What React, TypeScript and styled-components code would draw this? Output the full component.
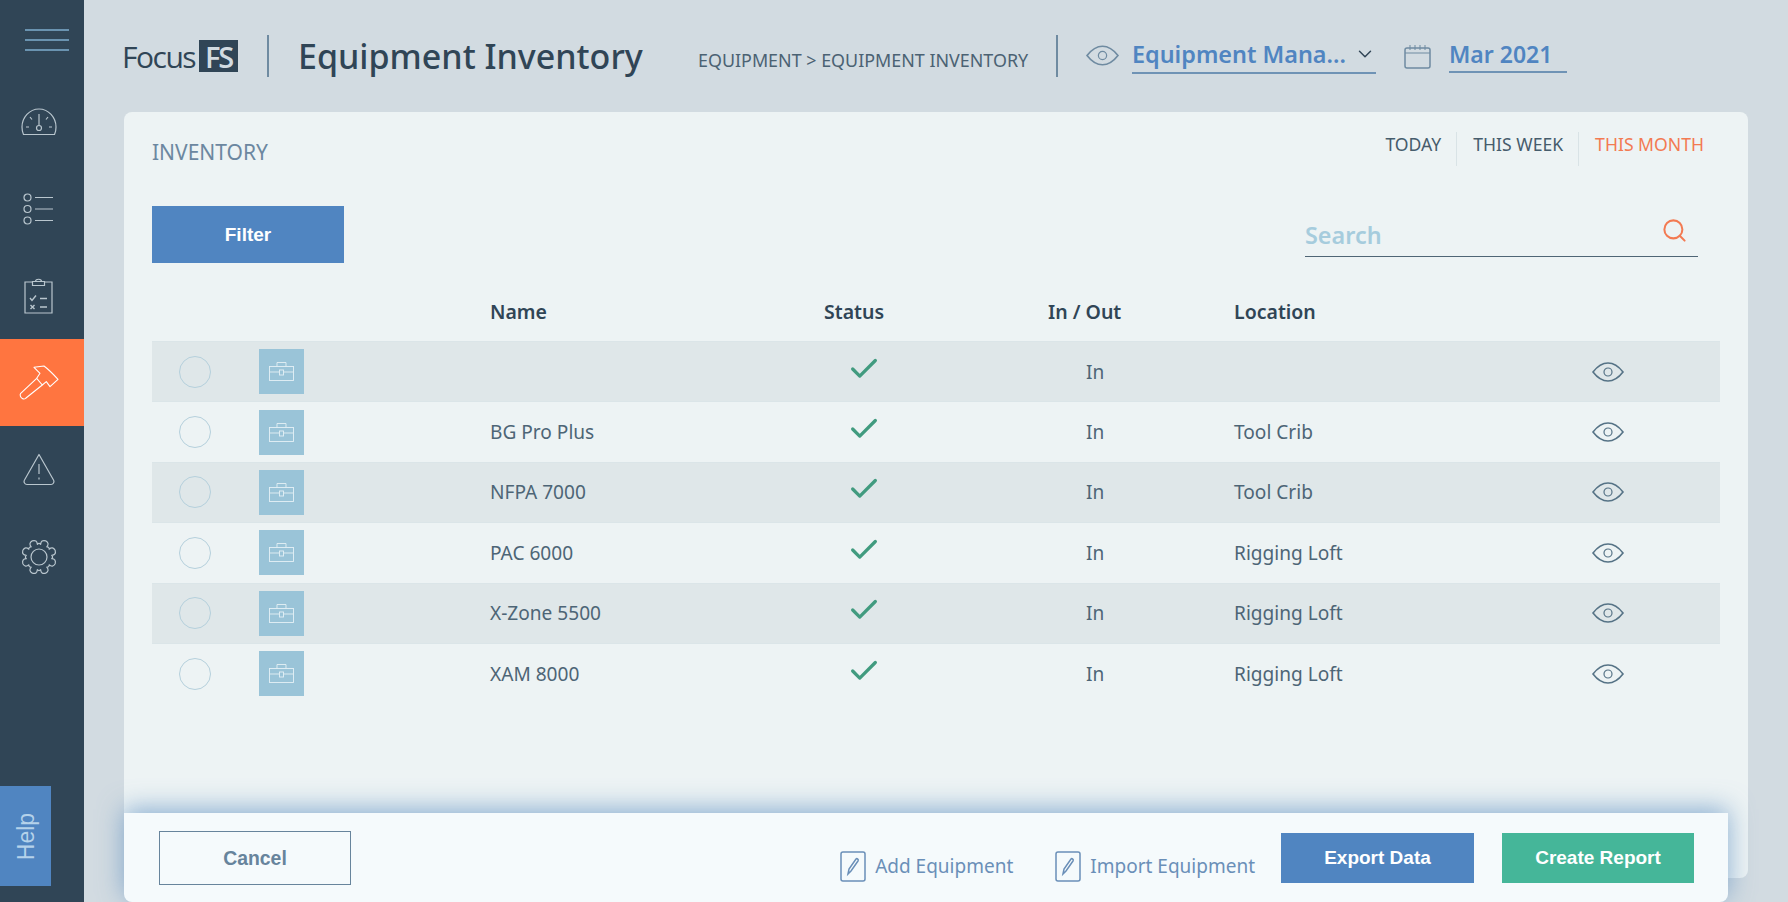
import styled, { createGlobalStyle } from "styled-components";
import { Check, ChevronDown, Search } from "lucide-react";

const GlobalStyle = createGlobalStyle`
  html, body {
    margin: 0;
    padding: 0;
    height: 100%;
    overflow: hidden;
    background: #d2dbe1;
  }
  * {
    box-sizing: border-box;
  }
`;

const Shell = styled.div`
  display: flex;
  height: 902px;
  font-family: "Noto Sans", sans-serif;
  color: #304556;
`;

const Sidebar = styled.nav`
  position: relative;
  flex: 0 0 84px;
  background: #304556;
  display: flex;
  flex-direction: column;
`;

const MenuButton = styled.div`
  height: 78px;
  padding: 29px 15px 0 25px;
  display: flex;
  flex-direction: column;
  gap: 8px;

  span {
    height: 2px;
    background: #6a93b0;
  }
`;

const SideItem = styled.div<{ $active?: boolean }>`
  height: 87px;
  display: flex;
  align-items: center;
  justify-content: center;
  padding-right: 7px;
  color: ${({ $active }) => ($active ? "#fff" : "#b9c6ce")};
  background: ${({ $active }) => ($active ? "#ff7540" : "transparent")};
`;

const HelpTab = styled.div`
  position: absolute;
  left: 0;
  top: 786px;
  width: 51px;
  height: 100px;
  padding-left: 2px;
  background: #5085c1;
  color: #b5d2ea;
  font-family: "Liberation Sans", sans-serif;
  font-size: 23px;
  display: flex;
  align-items: center;
  justify-content: center;

  span {
    transform: rotate(-90deg);
  }
`;

const Main = styled.main`
  position: relative;
  flex: 1;
  min-width: 0;
  padding: 0 40px 24px 40px;
  display: flex;
  flex-direction: column;
`;

const TopBar = styled.header`
  height: 112px;
  display: flex;
  align-items: flex-start;
  padding-top: 35px;
`;

const Logo = styled.div`
  width: 147px;
  height: 42px;
  margin-left: -2px;
  display: flex;
  align-items: center;
  gap: 4px;
  font-weight: 400;
  font-family: "Open Sans", sans-serif;
  font-size: 30px;
  letter-spacing: -1.5px;
  color: #304556;
  border-right: 2px solid #6f8ba1;

  b {
    width: 39px;
    height: 32px;
    display: flex;
    align-items: center;
    justify-content: center;
    background: #304556;
    color: #d2dbe1;
    font-weight: 600;
    font-size: 29px;
    letter-spacing: -2px;
  }
`;

const Title = styled.h1`
  margin: 0 0 0 29px;
  width: 400px;
  height: 42px;
  line-height: 42px;
  font-size: 34px;
  font-weight: 500;
  color: #304556;
  white-space: nowrap;
`;

const Crumbs = styled.div`
  width: 360px;
  height: 42px;
  padding-top: 13px;
  font-size: 17.9px;
  line-height: 24px;
  color: #4b6273;
  white-space: nowrap;
  border-right: 2px solid #6f8ba1;
`;

const Picker = styled.div<{ $width: number; $line: number; $size: number }>`
  width: ${({ $width }) => $width}px;
  height: 39px;
  border-bottom: 2px solid #6f93b5;
  display: flex;
  align-items: center;
  justify-content: space-between;
  font-size: ${({ $size }) => $size}px;
  font-weight: 600;
  color: #5085c1;
  white-space: nowrap;
  padding-top: ${({ $line }) => ($line < 0 ? 3 : 0)}px;
  margin-top: ${({ $line }) => $line}px;
`;

const TopIcon = styled.span<{ $gap: number; $left: number }>`
  display: flex;
  margin: 10px ${({ $gap }) => $gap}px 0 ${({ $left }) => $left}px;
  color: #6f8ba1;
`;

const Card = styled.section`
  position: relative;
  flex: 1;
  background: #edf3f4;
  border-radius: 8px;
  padding: 0 28px;
`;

const CardHead = styled.div`
  height: 94px;
  display: flex;
  justify-content: space-between;
  align-items: flex-start;
`;

const CardTitle = styled.h2`
  margin: 27px 0 0;
  font-size: 21px;
  line-height: 27px;
  font-weight: 400;
  color: #6c87a0;
`;

const Ranges = styled.div`
  display: flex;
  margin: 20px 16px 0 0;
`;

const Range = styled.span<{ $active?: boolean; $first?: boolean }>`
  font-size: 17.6px;
  line-height: 24px;
  height: 34px;
  padding: 0 ${({ $active }) => ($active ? "0" : "15px")} 0 ${({ $first }) => ($first ? "0" : "16px")};
  border-right: ${({ $active }) => ($active ? "none" : "1px solid #d9e3e6")};
  color: ${({ $active }) => ($active ? "#f37a52" : "#465c6c")};
`;

const Tools = styled.div`
  height: 57px;
  display: flex;
  justify-content: space-between;
`;

const Button = styled.button<{ $bg: string; $w: number; $h: number; $gap?: number }>`
  width: ${({ $w }) => $w}px;
  height: ${({ $h }) => $h}px;
  margin-right: ${({ $gap }) => $gap ?? 0}px;
  border: none;
  background: ${({ $bg }) => $bg};
  color: #fff;
  font-family: "Liberation Sans", sans-serif;
  font-weight: 700;
  font-size: 19px;
  padding: 0;
`;

const SearchBox = styled.div`
  width: 393px;
  height: 51px;
  margin-right: 22px;
  border-bottom: 1.5px solid #4f6575;
  display: flex;
  align-items: center;
  justify-content: space-between;
  padding: 0 10px 0 0;
  font-size: 23.4px;
  font-weight: 600;
  color: #a6ccdd;

  span {
    margin-top: 7px;
  }

  svg {
    color: #f37a52;
    margin-top: -2px;
  }
`;

const Columns = "107px 231px 334px 224px 186px 266px 1fr";

const HeadRow = styled.div`
  display: grid;
  grid-template-columns: ${Columns};
  height: 78px;
  align-items: center;
  padding-top: 18px;
  font-size: 19.5px;
  font-weight: 600;
  color: #304556;
`;

const Row = styled.div<{ $shade: boolean }>`
  display: grid;
  grid-template-columns: ${Columns};
  height: 60.4px;
  align-items: center;
  font-size: 19.1px;
  color: #4d6576;
  background: ${({ $shade }) => ($shade ? "#dfe7e9" : "transparent")};
  border-top: 1px solid #dbe5e8;
`;

const Radio = styled.span`
  width: 32px;
  height: 32px;
  margin-left: 27px;
  border-radius: 50%;
  border: 1.5px solid #b5d0dc;
`;

const Thumb = styled.span`
  width: 45px;
  height: 45px;
  background: #9ac4d8;
  color: #e4f0f5;
  display: flex;
  align-items: center;
  justify-content: center;
`;

const StatusCell = styled.span`
  display: flex;
  padding-left: 23px;
  margin-top: -6px;
  color: #419b7f;
`;

const InOutCell = styled.span`
  padding-left: 38px;
`;

const EyeCell = styled.span`
  display: flex;
  padding-left: 92px;
  color: #567386;
`;

const Footer = styled.footer`
  position: absolute;
  left: 40px;
  bottom: 0;
  width: 1604px;
  height: 89px;
  background: #f5fafc;
  border-radius: 0 0 8px 8px;
  box-shadow: 0 -4px 26px rgba(94, 144, 194, 0.7);
  padding: 18px 34px 0 35px;
  display: flex;
  align-items: flex-start;
`;

const CancelButton = styled.button`
  width: 192px;
  height: 54px;
  background: transparent;
  border: 1px solid #67849c;
  color: #67849c;
  font-family: "Liberation Sans", sans-serif;
  font-weight: 700;
  font-size: 19.4px;
  padding: 0;
  margin-right: auto;
`;

const LinkAction = styled.div<{ $gap: number }>`
  display: flex;
  align-items: center;
  gap: 9px;
  height: 32px;
  margin: 19px ${({ $gap }) => $gap}px 0 0;
  font-size: 19px;
  color: #6a8fb8;
  white-space: nowrap;
`;

const FooterButton = styled(Button)`
  margin-top: 2px;
`;

const gearPath = (() => {
  const at = (r: number, deg: number) => {
    const a = (deg * Math.PI) / 180;
    return `${(18 + r * Math.cos(a)).toFixed(2)} ${(18 + r * Math.sin(a)).toFixed(2)}`;
  };
  let d = "";
  for (let i = 0; i < 8; i++) {
    const c = i * 45 + 22.5;
    d += `${i === 0 ? "M" : "L"}${at(12.8, c - 15)} Q${at(17.5, c - 16)} ${at(17.5, c)} Q${at(17.5, c + 16)} ${at(12.8, c + 15)} `;
    d += `Q${at(14.5, c + 22.5)} ${at(12.8, c + 30)} `;
  }
  return d + "Z";
})();

const EyeIcon = ({ w, h }: { w: number; h: number }) => (
  <svg width={w} height={h} viewBox="0 0 32 20" fill="none" stroke="currentColor" strokeWidth="1.6">
    <path d="M1 10C6 3.500 10.500 1 16 1s10 2.500 15 9c-5 6.500-9.500 9-15 9s-10-2.500-15-9z" />
    <circle cx="16" cy="10" r="4" strokeWidth="1.200" />
  </svg>
);

const CalendarIcon = () => (
  <svg width="27" height="24" viewBox="0 0 27 24" fill="none" stroke="currentColor" strokeWidth="1.500">
    <rect x="1" y="3" width="25" height="20" rx="2" />
    <path d="M1 8h25M6 0v5M11 0v5M16 0v5M21 0v5" strokeWidth="1" />
  </svg>
);

const GaugeIcon = () => (
  <svg width="36" height="28" viewBox="0 0 36 28" fill="none" stroke="currentColor" strokeWidth="1.200">
    <path d="M2.500 26.500C1.500 24.500 1 22.500 1 19 1 9.500 8.500 1 18 1s17 8.500 17 18c0 3.500-.5 5.500-1.500 7.500z" />
    <circle cx="18" cy="20" r="2.500" />
    <path d="M18 17V6M5 19h3M28 19h3M9 9l2 2.500M27 9l-2 2.500" />
  </svg>
);

const ListIcon = () => (
  <svg width="32" height="32" viewBox="0 0 32 32" fill="none" stroke="currentColor" strokeWidth="1.200">
    <circle cx="4.500" cy="4.500" r="3.500" />
    <circle cx="4.500" cy="16" r="3.500" />
    <circle cx="4.500" cy="27.500" r="3.500" />
    <path d="M12 4.500h18M12 16h18M12 27.500h18" />
  </svg>
);

const ClipboardIcon = () => (
  <svg width="30" height="36" viewBox="0 0 30 36" fill="none" stroke="currentColor" strokeWidth="1.200">
    <path d="M9 4H1v31h27V4h-8" />
    <path d="M8.500 7.500V3.500h12v4zM11.500 3.500C11.500 .5 17.500 .5 17.500 3.500" />
    <path d="M6 20l2 2.500 4-5M16 20.500h7M6.500 27l4 4M10.500 27l-4 4M16 29h7" strokeWidth="1.400" />
  </svg>
);

const HammerIcon = () => (
  <svg width="40" height="36" viewBox="0 0 40 36" fill="none" stroke="currentColor" strokeWidth="1.100" strokeLinejoin="round">
    <path d="M15 2.300L25 1C29 4 35 10 39 14.300L31 21.700L27.300 16.700L23.300 20L17.700 13.300L21 8.300z" />
    <path d="M17.700 13.300L1.700 28.300C.5 30 1.500 32.500 3.300 33.500S6 33.800 6.700 33.300L23.300 20" />
  </svg>
);

const WarningIcon = () => (
  <svg width="32" height="33" viewBox="0 0 32 33" fill="none" stroke="currentColor" strokeWidth="1.200" strokeLinejoin="round">
    <path d="M16 1.500L30.500 27a3 3 0 0 1-2.500 4.500H4A3 3 0 0 1 1.500 27z" />
    <path d="M16 11v10M16 24.500v2" />
  </svg>
);

const GearIcon = () => (
  <svg width="36" height="36" viewBox="0 0 36 36" fill="none" stroke="currentColor" strokeWidth="1.200" strokeLinejoin="round">
    <path d={gearPath} />
    <circle cx="18" cy="18" r="8" />
  </svg>
);

const BriefcaseIcon = () => (
  <svg width="25" height="19" viewBox="0 0 25 19" fill="none" stroke="currentColor" strokeWidth="0.900">
    <rect x="0.500" y="4.500" width="24" height="14" />
    <path d="M8 4.500V.5h9v4M.5 10h10M14.500 10h10" />
    <rect x="10.500" y="8" width="4" height="5" />
  </svg>
);

const NoteIcon = () => (
  <svg width="26" height="31" viewBox="0 0 26 31" fill="none" stroke="currentColor" strokeWidth="1.500">
    <rect x="1" y="1" width="24" height="29" rx="2" />
    <path d="M8 23l1-5 7-10c1-1 3 .5 2 2l-7 10-3 3z" />
  </svg>
);

const rows = [
  { name: "", location: "" },
  { name: "BG Pro Plus", location: "Tool Crib" },
  { name: "NFPA 7000", location: "Tool Crib" },
  { name: "PAC 6000", location: "Rigging Loft" },
  { name: "X-Zone 5500", location: "Rigging Loft" },
  { name: "XAM 8000", location: "Rigging Loft" },
];

const App = () => {
  return (
    <Shell>
      <GlobalStyle />
      <Sidebar>
        <MenuButton>
          <span />
          <span />
          <span />
        </MenuButton>
        <SideItem>
          <GaugeIcon />
        </SideItem>
        <SideItem>
          <ListIcon />
        </SideItem>
        <SideItem>
          <ClipboardIcon />
        </SideItem>
        <SideItem $active>
          <HammerIcon />
        </SideItem>
        <SideItem>
          <WarningIcon />
        </SideItem>
        <SideItem>
          <GearIcon />
        </SideItem>
        <HelpTab>
          <span>Help</span>
        </HelpTab>
      </Sidebar>
      <Main>
        <TopBar>
          <Logo>
            Focus<b>FS</b>
          </Logo>
          <Title>Equipment Inventory</Title>
          <Crumbs>EQUIPMENT &gt; EQUIPMENT INVENTORY</Crumbs>
          <TopIcon $left={28} $gap={13}>
            <EyeIcon w={33} h={21} />
          </TopIcon>
          <Picker $width={244} $line={0} $size={23.4}>
            Equipment Mana...
            <ChevronDown size={22} strokeWidth={1.6} color="#304556" />
          </Picker>
          <TopIcon $left={28} $gap={18}>
            <CalendarIcon />
          </TopIcon>
          <Picker $width={118} $line={-1} $size={23}>
            Mar 2021
          </Picker>
        </TopBar>
        <Card>
          <CardHead>
            <CardTitle>INVENTORY</CardTitle>
            <Ranges>
              <Range $first>TODAY</Range>
              <Range>THIS WEEK</Range>
              <Range $active>THIS MONTH</Range>
            </Ranges>
          </CardHead>
          <Tools>
            <Button $bg="#5085c1" $w={192} $h={57}>
              Filter
            </Button>
            <SearchBox>
              <span>Search</span>
              <Search size={27} strokeWidth={1.8} />
            </SearchBox>
          </Tools>
          <HeadRow>
            <span />
            <span />
            <span>Name</span>
            <span>Status</span>
            <span>In / Out</span>
            <span>Location</span>
          </HeadRow>
          {rows.map((row, i) => (
            <Row key={i} $shade={i % 2 === 0}>
              <Radio />
              <Thumb>
                <BriefcaseIcon />
              </Thumb>
              <span>{row.name}</span>
              <StatusCell>
                <Check size={34} strokeWidth={2.3} />
              </StatusCell>
              <InOutCell>In</InOutCell>
              <span>{row.location}</span>
              <EyeCell>
                <EyeIcon w={32} h={20} />
              </EyeCell>
            </Row>
          ))}
        </Card>
        <Footer>
          <CancelButton>Cancel</CancelButton>
          <LinkAction $gap={42}>
            <NoteIcon />
            Add Equipment
          </LinkAction>
          <LinkAction $gap={26}>
            <NoteIcon />
            Import Equipment
          </LinkAction>
          <FooterButton $bg="#5085c1" $w={193} $h={50} $gap={28}>
            Export Data
          </FooterButton>
          <FooterButton $bg="#45b699" $w={192} $h={50}>
            Create Report
          </FooterButton>
        </Footer>
      </Main>
    </Shell>
  );
};

export default App;
